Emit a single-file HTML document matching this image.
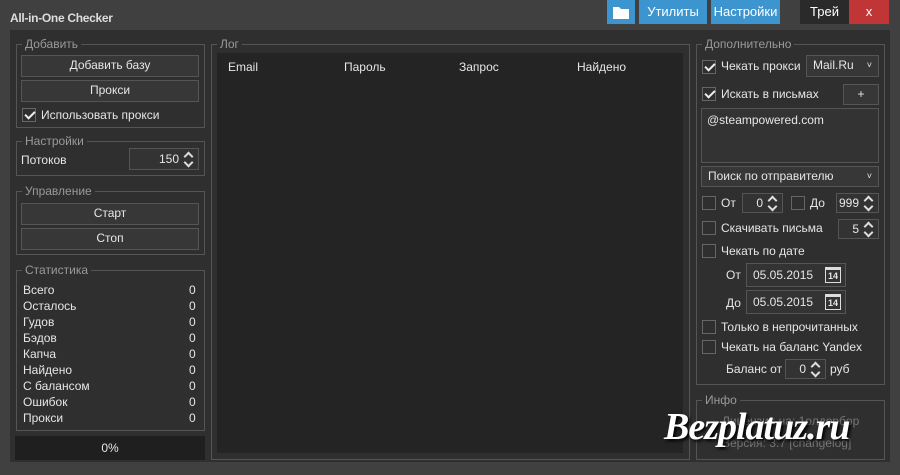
<!DOCTYPE html>
<html><head><meta charset="utf-8"><style>
*{box-sizing:border-box;margin:0;padding:0}
body{width:900px;height:475px;background:#404040;font-family:"Liberation Sans","DejaVu Sans",sans-serif;font-size:12px;color:#e6e6e6;position:relative;overflow:hidden}
.a{position:absolute}
.panel{left:10px;top:30px;width:880px;height:432px;background:#2f2f2f}
.g{position:absolute;border:1px solid #555}
.lg{position:absolute;top:-8px;left:5px;background:#2f2f2f;padding:0 3px;color:#9a9a9a;font-size:12px}
.btn{position:absolute;border:1px solid #555;background:#373737;text-align:center;line-height:19px;color:#e6e6e6}
.cb{position:absolute;width:14px;height:14px;border:1px solid #666;background:#2f2f2f}
.cb.on::after{content:"";position:absolute;left:4px;top:0px;width:4px;height:8px;border:solid #eee;border-width:0 2px 2px 0;transform:rotate(45deg)}
.t{position:absolute;white-space:nowrap}
.sp{position:absolute;border:1px solid #555;background:#333;text-align:right;padding-right:19px;line-height:18px}
.sp::before,.sp::after{content:"";position:absolute;right:6px;width:5px;height:5px;border:solid #ddd;border-width:2px 0 0 2px}
.sp::before{top:calc(50% - 6px);transform:rotate(45deg)}
.sp::after{top:calc(50% + 0px);transform:rotate(225deg)}
.tb{position:absolute;top:0;height:24px;line-height:24px;text-align:center;color:#fff;font-size:13px}
</style></head><body>
<div class="t" style="left:10px;top:11px;font-weight:bold;font-size:12px;color:#ddd;letter-spacing:-0.3px">All-in-One Checker</div>
<div class="tb" style="left:607px;width:28px;background:#3d95d0"><svg width="16" height="13" viewBox="0 0 16 13" style="margin-top:6px"><path d="M0 1h6l2 2h8v10H0z" fill="#fff"/></svg></div>
<div class="tb" style="left:639px;width:68px;background:#3d95d0">Утилиты</div>
<div class="tb" style="left:711px;width:69px;background:#3d95d0">Настройки</div>
<div class="tb" style="left:800px;width:49px;background:#2a2a2a">Трей</div>
<div class="tb" style="left:849px;width:40px;background:#c03535">x</div>
<div class="a panel"></div>

<div class="g" style="left:16px;top:44px;width:189px;height:84px"><span class="lg">Добавить</span></div>
<div class="btn" style="left:21px;top:55px;width:178px;height:22px">Добавить базу</div>
<div class="btn" style="left:21px;top:80px;width:178px;height:22px">Прокси</div>
<div class="cb on" style="left:22px;top:108px"></div><div class="t" style="left:41px;top:108px">Использовать прокси</div>

<div class="g" style="left:16px;top:141px;width:189px;height:35px"><span class="lg">Настройки</span></div>
<div class="t" style="left:21px;top:153px">Потоков</div>
<div class="sp" style="left:129px;top:148px;width:70px;height:22px;line-height:20px">150</div>

<div class="g" style="left:16px;top:191px;width:189px;height:64px"><span class="lg">Управление</span></div>
<div class="btn" style="left:21px;top:203px;width:178px;height:22px">Старт</div>
<div class="btn" style="left:21px;top:228px;width:178px;height:22px">Стоп</div>

<div class="g" style="left:16px;top:270px;width:189px;height:161px"><span class="lg">Статистика</span></div>
<div class="t" style="left:23px;top:282px;line-height:16px">Всего<br>Осталось<br>Гудов<br>Бэдов<br>Капча<br>Найдено<br>С балансом<br>Ошибок<br>Прокси</div>
<div class="t" style="left:189px;top:282px;line-height:16px">0<br>0<br>0<br>0<br>0<br>0<br>0<br>0<br>0</div>
<div class="a" style="left:15px;top:436px;width:190px;height:24px;background:#1f1f1f;text-align:center;line-height:24px">0%</div>

<div class="g" style="left:211px;top:44px;width:479px;height:416px"><span class="lg">Лог</span></div>
<div class="a" style="left:217px;top:53px;width:466px;height:400px;background:#242424"></div>
<div class="t" style="left:228px;top:60px">Email</div>
<div class="t" style="left:344px;top:60px">Пароль</div>
<div class="t" style="left:459px;top:60px">Запрос</div>
<div class="t" style="left:577px;top:60px">Найдено</div>

<div class="g" style="left:696px;top:44px;width:189px;height:341px"><span class="lg">Дополнительно</span></div>
<div class="cb on" style="left:702px;top:60px"></div><div class="t" style="left:721px;top:59px">Чекать прокси</div>
<div class="btn" style="left:806px;top:55px;width:73px;height:22px;text-align:left;padding-left:6px">Mail.Ru<span style="position:absolute;right:6px;font-size:9px">˅</span></div>
<div class="cb on" style="left:702px;top:87px"></div><div class="t" style="left:721px;top:87px">Искать в письмах</div>
<div class="btn" style="left:843px;top:84px;width:36px;height:21px">+</div>
<div class="a" style="left:701px;top:108px;width:178px;height:55px;border:1px solid #555;background:#333;padding:4px 5px">@steampowered.com</div>
<div class="btn" style="left:701px;top:166px;width:178px;height:21px;text-align:left;padding-left:6px">Поиск по отправителю<span style="position:absolute;right:6px;font-size:9px">˅</span></div>
<div class="cb" style="left:702px;top:196px"></div><div class="t" style="left:721px;top:196px">От</div>
<div class="sp" style="left:742px;top:193px;width:41px;height:20px">0</div>
<div class="cb" style="left:791px;top:196px"></div><div class="t" style="left:810px;top:196px">До</div>
<div class="sp" style="left:836px;top:193px;width:43px;height:20px">999</div>
<div class="cb" style="left:702px;top:221px"></div><div class="t" style="left:721px;top:221px">Скачивать письма</div>
<div class="sp" style="left:838px;top:219px;width:41px;height:20px">5</div>
<div class="cb" style="left:702px;top:244px"></div><div class="t" style="left:721px;top:244px">Чекать по дате</div>
<div class="t" style="left:726px;top:268px">От</div>
<div class="a" style="left:746px;top:263px;width:100px;height:24px;border:1px solid #555;background:#333;padding:4px 6px">05.05.2015<span style="position:absolute;right:4px;top:3px;width:16px;height:16px;border:1px solid #ddd;border-top-width:3px;font-size:9px;line-height:12px;text-align:center;font-weight:bold">14</span></div>
<div class="t" style="left:726px;top:296px">До</div>
<div class="a" style="left:746px;top:290px;width:100px;height:24px;border:1px solid #555;background:#333;padding:4px 6px">05.05.2015<span style="position:absolute;right:4px;top:3px;width:16px;height:16px;border:1px solid #ddd;border-top-width:3px;font-size:9px;line-height:12px;text-align:center;font-weight:bold">14</span></div>
<div class="cb" style="left:702px;top:320px"></div><div class="t" style="left:721px;top:320px">Только в непрочитанных</div>
<div class="cb" style="left:702px;top:340px"></div><div class="t" style="left:721px;top:340px">Чекать на баланс Yandex</div>
<div class="t" style="left:726px;top:362px">Баланс от</div>
<div class="sp" style="left:785px;top:359px;width:41px;height:20px">0</div>
<div class="t" style="left:830px;top:362px">руб</div>

<div class="g" style="left:696px;top:400px;width:189px;height:60px"><span class="lg">Инфо</span></div>
<div class="t" style="left:722px;top:414px;color:#777">Лицензия на: 1олдорбор</div>
<div class="t" style="left:722px;top:436px;color:#777">Версия: 3.7 [changelog]</div>
<div class="t" style="left:664px;top:405px;font-family:'Liberation Serif',serif;font-style:italic;font-weight:bold;font-size:38px;color:#fff;letter-spacing:-1px;text-shadow:2px 2px 3px #000">Bezplatuz.ru</div>
</body></html>
